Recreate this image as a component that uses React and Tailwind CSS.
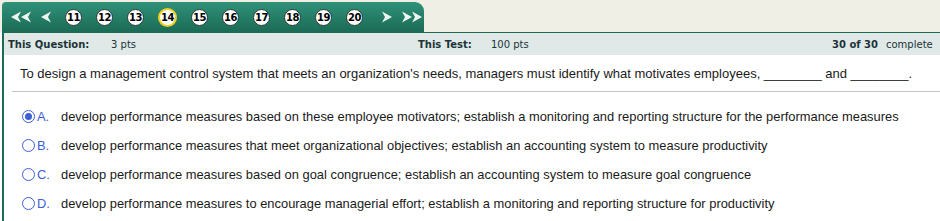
import React from 'react';

const pages = [11, 12, 13, 14, 15, 16, 17, 18, 19, 20];

const options = [
  { letter: 'A', text: 'develop performance measures based on these employee motivators; establish a monitoring and reporting structure for the performance measures', checked: true },
  { letter: 'B', text: 'develop performance measures that meet organizational objectives; establish an accounting system to measure productivity' },
  { letter: 'C', text: 'develop performance measures based on goal congruence; establish an accounting system to measure goal congruence' },
  { letter: 'D', text: 'develop performance measures to encourage managerial effort; establish a monitoring and reporting structure for productivity' },
];

const Arrow = ({ dir = 'left', double = false }) => {
  const head = 'M10 0 L0 5.5 L10 11 L7 5.5 Z';
  return (
    <svg width={double ? 22 : 12} height="12" viewBox={double ? '0 0 22 12' : '0 0 12 12'}>
      <g transform={dir === 'right' ? `translate(${double ? 22 : 12} 0) scale(-1 1)` : ''} fill="#eef5f1">
        <path d={head} transform="translate(1 0.5)" />
        {double && <path d={head} transform="translate(11 0.5)" />}
      </g>
    </svg>
  );
};

const PageDot = ({ n }) => {
  const current = n === 14;
  return (
    <div
      className={`flex items-center justify-center rounded-full bg-white text-[10px] font-bold text-black ${
        current ? 'w-[19px] h-[19px] border-[2px] border-[#f0d020]' : 'w-[17px] h-[17px] border-[1.5px] border-[#2a3a34]'
      }`}
      style={{ fontFamily: '"DejaVu Sans", Verdana, sans-serif', letterSpacing: '-0.5px' }}
    >
      {n}
    </div>
  );
};

const Radio = ({ checked }) => (
  <span className="flex items-center justify-center w-[13px] h-[13px] rounded-full border border-[#3d5fd6] bg-white">
    {checked && <span className="w-[7px] h-[7px] rounded-full bg-[#3d5fd6]" />}
  </span>
);

export default function App() {
  return (
    <div className="w-[940px] h-[221px] overflow-hidden bg-white">
      <div className="flex h-[32px] bg-[#f0efe6] pl-[2px] pt-[2px]">
        <div className="flex items-center w-[422px] h-[30px] rounded-tl-[4px] rounded-tr-[9px] bg-gradient-to-b from-[#30917a] to-[#1b6b55] pl-[8px]">
          <Arrow double />
          <span className="ml-[8px]"><Arrow /></span>
          <div className="flex items-center gap-[14px] ml-[13px]">
            {pages.map((n) => (
              <PageDot key={n} n={n} />
            ))}
          </div>
          <span className="ml-[18px]"><Arrow dir="right" /></span>
          <span className="ml-[8px]"><Arrow dir="right" double /></span>
        </div>
      </div>
      <div className="ml-[2px] border-l-2 border-[#1e6b55] h-full">
        <div
          className="flex items-center h-[23px] bg-[#e0e9e7] border-t border-[#1e6b55] text-[10px] text-[#1c3438] whitespace-nowrap"
          style={{ fontFamily: '"DejaVu Sans", Verdana, sans-serif' }}
        >
          <span className="font-bold ml-[4px] w-[103px]">This Question:</span>
          <span className="w-[307px]">3 pts</span>
          <span className="font-bold w-[73px]">This Test:</span>
          <span className="w-[341px]">100 pts</span>
          <span className="font-bold w-[54px]">30 of 30</span>
          <span>complete</span>
        </div>
        <div
          className="text-[13px] text-[#1a1a1a]"
          style={{ fontFamily: '"Liberation Sans", Arial, sans-serif' }}
        >
          <p className="pl-[16px] pt-[11px] pb-[9px] leading-[16px] whitespace-nowrap">
            To design a management control system that meets an organization's needs, managers must identify what motivates employees, ________ and ________.
          </p>
          <div className="ml-[8px] border-t border-[#c4c4c4]" />
          <div className="flex flex-col gap-[12px] pt-[16px] pl-[18px] text-[12.9px]">
            {options.map((o) => (
              <div key={o.letter} className="flex items-center h-[17px] whitespace-nowrap">
                <Radio checked={o.checked} />
                <span className="ml-[2px] w-[24px] text-[#3d5fd6]">{o.letter}.</span>
                <span>{o.text}</span>
              </div>
            ))}
          </div>
        </div>
      </div>
    </div>
  );
}
